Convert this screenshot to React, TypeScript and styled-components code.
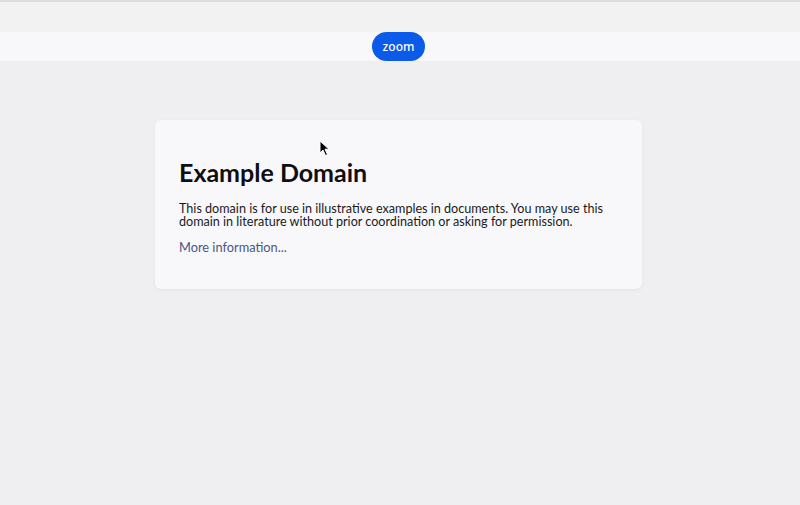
import React from "react";
import styled, { createGlobalStyle } from "styled-components";

const Global = createGlobalStyle`
  html, body { margin: 0; padding: 0; }
  body {
    background: #efeff1;
    font-family: Lato, "Noto Sans", sans-serif;
    width: 800px;
    height: 505px;
    overflow: hidden;
  }
`;

const Page = styled.div`
  position: relative;
  width: 800px;
  height: 505px;
  display: flex;
  flex-direction: column;
  background: #efeff1;
`;

const TopEdge = styled.div`
  height: 2px;
  background: #dedee2;
`;

const TabBand = styled.div`
  height: 30px;
  background: #f2f2f2;
`;

const Toolbar = styled.div`
  height: 29px;
  background: #f8f8fa;
  display: flex;
  justify-content: center;
  align-items: center;
`;

const ZoomButton = styled.button`
  height: 29px;
  width: 53px;
  margin-left: -3px;
  border: none;
  border-radius: 15px;
  background: #0b5be8;
  color: #ffffff;
  font-family: "Noto Sans", sans-serif;
  font-size: 12px;
  font-weight: 500;
  padding: 0;
`;

const Content = styled.div`
  display: flex;
  justify-content: center;
  padding-top: 59px;
`;

const Card = styled.div`
  width: 487px;
  height: 169px;
  margin-left: -3px;
  box-sizing: border-box;
  background: #f8f8fa;
  border-radius: 6px;
  box-shadow: 0 1px 4px rgba(0, 0, 0, 0.05);
  padding: 37px 20px 0 24px;
`;

const Title = styled.h1`
  margin: 0;
  font-family: Lato, sans-serif;
  font-size: 25px;
  line-height: 30px;
  font-weight: 700;
  color: #0f0f12;
`;

const Para = styled.p`
  margin: 15px 0 0 0;
  font-family: Lato, sans-serif;
  font-size: 12.6px;
  line-height: 13px;
  color: #1a1a1e;
`;

const Link = styled.a`
  display: block;
  margin-top: 12px;
  font-family: Lato, sans-serif;
  font-size: 12.8px;
  line-height: 14px;
  color: #4c5583;
  text-decoration: none;
`;

const Cursor = styled.svg`
  position: absolute;
  left: 319px;
  top: 140px;
`;

export default function App() {
  return (
    <>
      <Global />
      <Page>
        <TopEdge />
        <TabBand />
        <Toolbar>
          <ZoomButton>zoom</ZoomButton>
        </Toolbar>
        <Content>
          <Card>
            <Title>Example Domain</Title>
            <Para>
              This domain is for use in illustrative examples in documents. You may use this
              domain in literature without prior coordination or asking for permission.
            </Para>
            <Link href="#">More information...</Link>
          </Card>
        </Content>
        <Cursor width="11" height="17" viewBox="0 0 11 17">
          <path d="M1 1 L1 13 L4 10 L6.5 15.5 L8.5 14.6 L6 9.2 L10 9.2 Z" fill="#000" stroke="#fff" strokeWidth="1" />
        </Cursor>
      </Page>
    </>
  );
}
